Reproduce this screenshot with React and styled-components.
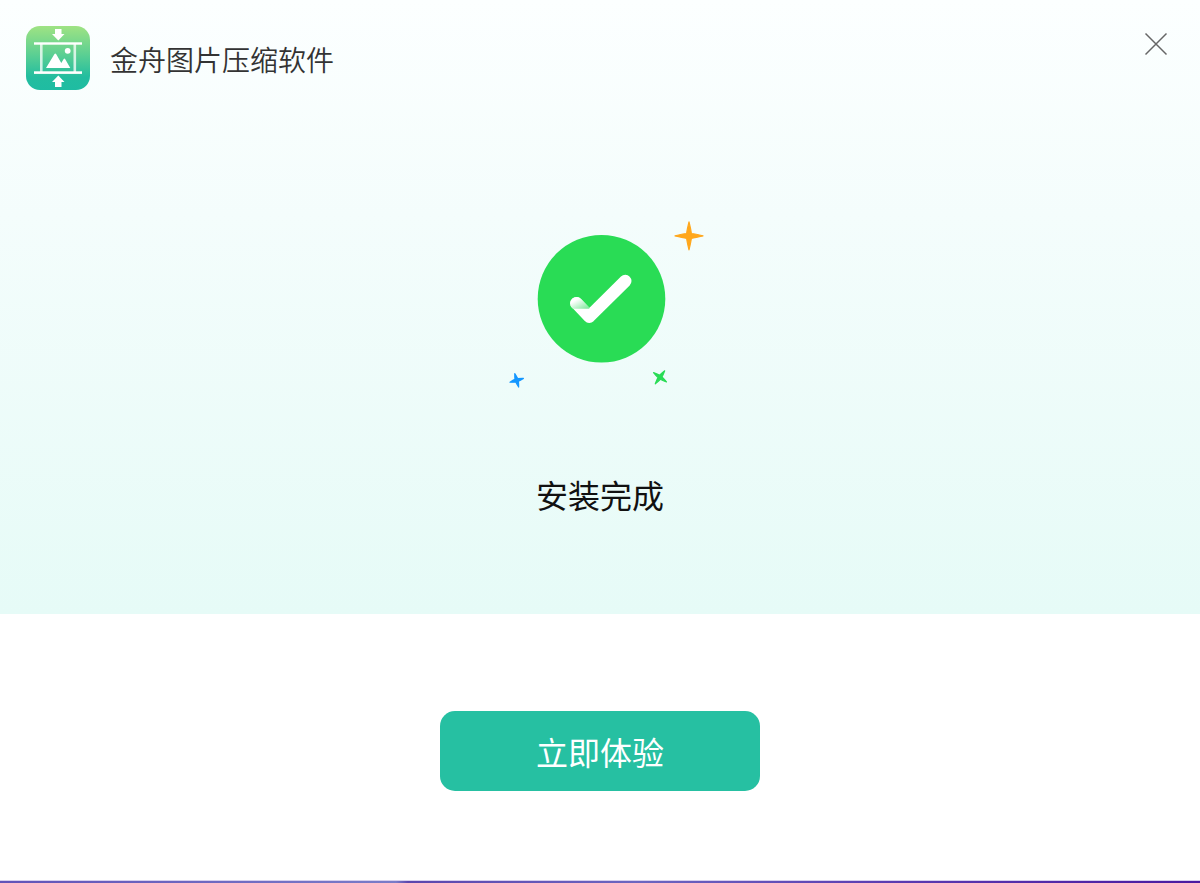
import React from 'react'
import styled, { createGlobalStyle } from 'styled-components'

const colours = {
  accent: '#26c0a2',
  success: '#29dc55',
  heading: '#111111',
  text: '#333333',
  close: '#666666'
}

const fontStack = '"Noto Sans CJK SC", "Noto Sans", sans-serif'

const GlobalStyle = createGlobalStyle`
  *,
  *::before,
  *::after {
    box-sizing: border-box;
  }

  body {
    background: #ffffff;
    font-family: ${fontStack};
    margin: 0;
  }
`

// Four pointed star centred on 0,0
const Sparkle = ({ x, y, size, angle = 0, waist = 0.17, fill }) => {
  const w = size * waist
  const c = w * 0.8
  const m = size * 0.45
  const d = `M0 ${-size} Q${c} ${-m} ${w} ${-w} Q${m} ${-c} ${size} 0 Q${m} ${c} ${w} ${w} Q${c} ${m} 0 ${size} Q${-c} ${m} ${-w} ${w} Q${-m} ${c} ${-size} 0 Q${-m} ${-c} ${-w} ${-w} Q${-c} ${-m} 0 ${-size}Z`

  return (
    <path
      d={d}
      transform={`translate(${x} ${y}) rotate(${angle})`}
      fill={fill}
      stroke={fill}
      strokeWidth="1.2"
      strokeLinejoin="round"
    />
  )
}

const Logo = () => (
  <LogoMark viewBox="0 0 64 64" aria-hidden="true">
    <defs>
      <linearGradient id="logo-fill" x1="0" y1="0" x2="0" y2="1">
        <stop offset="0" stopColor="#9fe383" />
        <stop offset="0.45" stopColor="#5bcf93" />
        <stop offset="0.8" stopColor="#22bd9f" />
        <stop offset="1" stopColor="#1fbca2" />
      </linearGradient>
    </defs>
    <rect width="64" height="64" rx="14" fill="url(#logo-fill)" />
    <g fill="#ffffff">
      <path d="M29 3h6.5v5h3L32.3 14.500 26 8h3z" />
      <path d="M29 61h6.5v-5h3L32.300 49.500 26 56h3z" />
      <rect x="8" y="16.3" width="48" height="2.4" />
      <rect x="8" y="45.3" width="48" height="2.6" />
      <rect x="14" y="17" width="2.6" height="30" opacity="0.75" />
      <rect x="47.5" y="17" width="2.6" height="30" opacity="0.75" />
      <path d="M20 42l8.500-14q.8-1 1.600 0L35.300 37l2.400-4q.7-.8 1.400 0L44.300 42z" />
      <circle cx="41.7" cy="24.8" r="2.9" />
    </g>
  </LogoMark>
)

const SuccessArt = () => (
  <Artwork viewBox="0 0 208 170" aria-hidden="true">
    <defs>
      <linearGradient id="tick-fold" gradientUnits="userSpaceOnUse" x1="80" y1="80" x2="86" y2="91">
        <stop offset="0" stopColor="#ffffff" />
        <stop offset="1" stopColor="#86e9a0" />
      </linearGradient>
      <clipPath id="tick-clip">
        <rect x="70" y="70" width="23.3" height="18.7" />
      </clipPath>
    </defs>
    <circle cx="105.5" cy="78.7" r="63.8" fill={colours.success} />
    <path
      d="M80.5 83.3L93.3 96.7 129.3 61"
      fill="none"
      stroke="#ffffff"
      strokeWidth="12.4"
      strokeLinecap="round"
      strokeLinejoin="round"
    />
    <path
      d="M80.5 83.3L93.3 96.7"
      fill="none"
      stroke="url(#tick-fold)"
      strokeWidth="12.8"
      strokeLinecap="round"
      clipPath="url(#tick-clip)"
    />
    <Sparkle x={193} y={15.9} size={14} fill="#ffa71c" />
    <Sparkle x={20.7} y={160.3} size={7} angle={-16} waist={0.2} fill="#1497ff" />
    <Sparkle x={164} y={157.3} size={8} angle={36} waist={0.18} fill={colours.success} />
  </Artwork>
)

const App = () => (
  <Installer>
    <GlobalStyle />
    <Hero>
      <Header>
        <Logo />
        <AppName>金舟图片压缩软件</AppName>
        <CloseButton type="button" aria-label="关闭">
          <svg width="24" height="24" viewBox="0 0 24 24" aria-hidden="true">
            <path d="M1.5 1.5l21 21M22.5 1.5l-21 21" stroke="currentColor" strokeWidth="1.5" />
          </svg>
        </CloseButton>
      </Header>
      <Result>
        <SuccessArt />
        <Status>安装完成</Status>
      </Result>
    </Hero>
    <Actions>
      <StartButton type="button">立即体验</StartButton>
    </Actions>
    <Edge />
  </Installer>
)

const Installer = styled.div`
  display: flex;
  flex-direction: column;
  min-height: 100vh;
`

const Hero = styled.section`
  background: linear-gradient(to bottom, #fcffff 0%, #f4fdfc 35%, #e6fbf7 100%);
  padding: 26px 26px 96px;
`

const Header = styled.header`
  align-items: flex-start;
  display: flex;
  gap: 20px;
`

const LogoMark = styled.svg`
  flex: none;
  height: 64px;
  width: 64px;
`

const AppName = styled.h1`
  color: ${colours.text};
  flex: 1;
  font-size: 28px;
  font-weight: 350;
  line-height: 66px;
  margin: 0;
`

const CloseButton = styled.button`
  align-items: center;
  background: transparent;
  border: 0;
  color: ${colours.close};
  cursor: pointer;
  display: flex;
  height: 36px;
  justify-content: center;
  padding: 0;
  width: 36px;
`

const Result = styled.div`
  align-items: center;
  display: flex;
  flex-direction: column;
  gap: 80px;
  padding-top: 128px;
`

const Artwork = styled.svg`
  height: 170px;
  width: 208px;
`

const Status = styled.p`
  color: ${colours.heading};
  font-size: 32px;
  line-height: 48px;
  margin: 0;
`

const Actions = styled.section`
  background: #ffffff;
  flex: 1;
  padding: 97px 26px 80px;
  text-align: center;
`

const StartButton = styled.button`
  background: ${colours.accent};
  border: 0;
  border-radius: 15px;
  color: #ffffff;
  cursor: pointer;
  font-family: inherit;
  font-size: 32px;
  height: 80px;
  line-height: 48px;
  padding: 0;
  width: 320px;

  &:hover {
    background: #22b397;
  }
`

// Strip of desktop showing along the bottom of the window
const Edge = styled.div`
  background: linear-gradient(to right, #6253b8 0%, #7a7cc8 33%, #5b45ad 34%, #6c66c0 53%, #5a3ab0 75%, #4a1aa0 100%);
  border-top: 1px solid #d6d0ee;
  height: 3px;
`

export default App
